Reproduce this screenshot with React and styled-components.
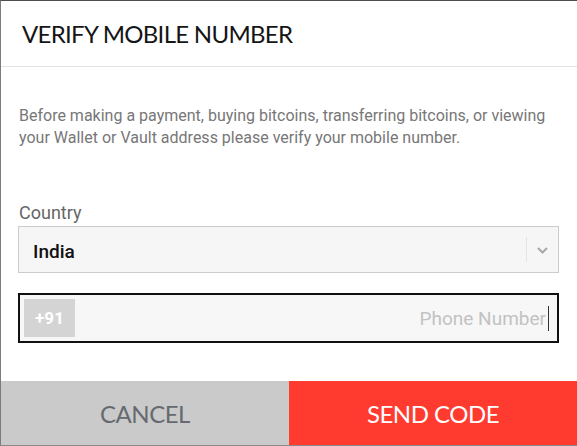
import styled, { createGlobalStyle } from "styled-components";

const GlobalStyle = createGlobalStyle`
    html, body {
        margin: 0;
        padding: 0;
        background: #ffffff;
    }
    * {
        box-sizing: border-box;
    }
`;

const App = () => {
    return (
        <>
            <GlobalStyle />
            <Dialog>
                <Header>
                    <Title>VERIFY MOBILE NUMBER</Title>
                </Header>
                <Body>
                    <Intro>
                        Before making a payment, buying bitcoins, transferring bitcoins, or viewing
                        your Wallet or Vault address please verify your mobile number.
                    </Intro>
                    <Label>Country</Label>
                    <SelectBox>
                        <SelectValue>India</SelectValue>
                        <SelectArrow>
                            <svg width="11" height="7" viewBox="0 0 11 7">
                                <path d="M1 1 L5.5 5.5 L10 1" fill="none" stroke="#a8a8a8" strokeWidth="2" />
                            </svg>
                        </SelectArrow>
                    </SelectBox>
                    <PhoneBox>
                        <Prefix>+91</Prefix>
                        <PhoneInput placeholder="Phone Number" />
                        <Caret />
                    </PhoneBox>
                </Body>
                <Footer>
                    <FooterButton>CANCEL</FooterButton>
                    <FooterButton primary>SEND CODE</FooterButton>
                </Footer>
            </Dialog>
        </>
    );
};

const Dialog = styled.div`
    width: 577px;
    height: 446px;
    display: flex;
    flex-direction: column;
    background: #ffffff;
    border-top: 1px solid #4d4d4d;
    border-left: 1px solid #7c7c7c;
    border-bottom: 1px solid #8a8a8a;
`;

const Header = styled.div`
    height: 66px;
    display: flex;
    align-items: center;
    padding-left: 21px;
    border-bottom: 1px solid #e3e3e3;
`;

const Title = styled.h1`
    margin: 0;
    font-family: "Lato", "Liberation Sans", sans-serif;
    font-weight: 400;
    font-size: 24px;
    letter-spacing: -0.7px;
    color: #151515;
`;

const Body = styled.div`
    flex: 1;
    display: flex;
    flex-direction: column;
    width: 576px;
    padding: 38px 18px 0 17px;
    font-family: "Roboto", "Liberation Sans", sans-serif;
`;

const Intro = styled.p`
    margin: 0 0 0 1px;
    font-size: 16px;
    line-height: 22px;
    color: #777777;
`;

const Label = styled.div`
    margin: 53px 0 2px 1px;
    font-size: 18px;
    line-height: 22px;
    color: #666666;
`;

const SelectBox = styled.div`
    width: 100%;
    height: 47px;
    display: flex;
    align-items: center;
    background: #f6f6f6;
    border: 1px solid #cccccc;
`;

const SelectValue = styled.div`
    flex: 1;
    padding: 3px 0 0 14px;
    font-size: 19px;
    font-weight: 500;
    color: #111111;
`;

const SelectArrow = styled.div`
    width: 32px;
    height: 25px;
    display: flex;
    align-items: center;
    justify-content: center;
    border-left: 1px solid #e4e4e4;
    padding-top: 2px;
`;

const PhoneBox = styled.div`
    width: 100%;
    margin-top: 20px;
    height: 50px;
    display: flex;
    align-items: center;
    padding: 4px;
    background: #f7f7f7;
    border: 2px solid #111111;
`;

const Prefix = styled.div`
    width: 51px;
    height: 38px;
    display: flex;
    align-items: center;
    justify-content: center;
    background: #d4d4d4;
    color: #ffffff;
    font-size: 17px;
    font-weight: 700;
`;

const PhoneInput = styled.input`
    flex: 1;
    min-width: 0;
    height: 38px;
    border: none;
    outline: none;
    background: transparent;
    text-align: right;
    padding: 0;
    font-family: "Roboto", "Liberation Sans", sans-serif;
    font-size: 19px;
    color: #222222;
    &::placeholder {
        color: #c2c2c2;
    }
`;

const Caret = styled.span`
    width: 1px;
    height: 25px;
    margin: 0 4px 0 2px;
    background: #333333;
`;

const Footer = styled.div`
    height: 64px;
    display: grid;
    grid-template-columns: 288px 1fr;
`;

const FooterButton = styled.button`
    border: none;
    margin: 0;
    padding: 0;
    background: ${(props) => (props.primary ? "#ff3a2f" : "#cacaca")};
    color: ${(props) => (props.primary ? "#ffffff" : "#666a70")};
    font-family: "Lato", "Liberation Sans", sans-serif;
    font-size: 24px;
    font-weight: 400;
    letter-spacing: -0.5px;
    cursor: pointer;
`;

export default App;
